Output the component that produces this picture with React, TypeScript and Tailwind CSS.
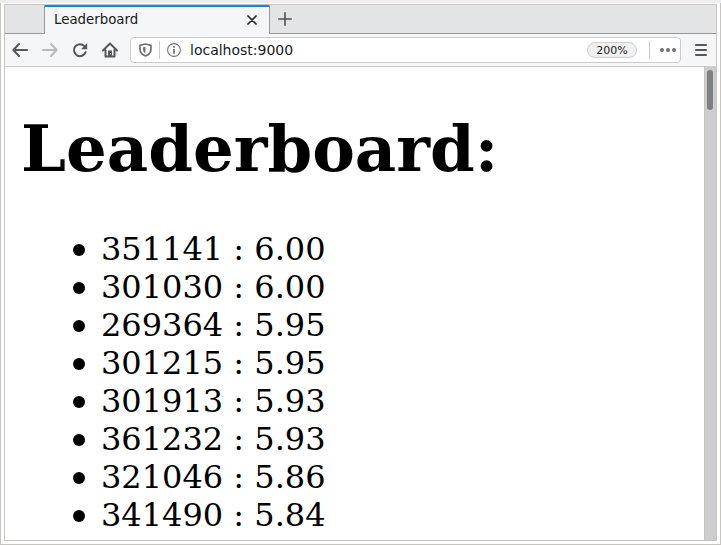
const scores = [
  ["351141", "6.00"],
  ["301030", "6.00"],
  ["269364", "5.95"],
  ["301215", "5.95"],
  ["301913", "5.93"],
  ["361232", "5.93"],
  ["321046", "5.86"],
  ["341490", "5.84"],
];

function TabBar() {
  return (
    <div className="flex h-[29px] shrink-0 bg-[#e2e4e6]">
      <div className="w-10 border-r border-b border-[#98989d]" />
      <div className="flex w-[224px] items-center justify-between border-t-2 border-[#0a84ff] bg-[#f5f6f8] pr-3 pb-px pl-[9px]">
        <span className="pb-px text-[13.33px] leading-[18px] text-[#18191a]">Leaderboard</span>
        <svg width="10" height="10" viewBox="0 0 10 10" fill="none" stroke="#242628" strokeWidth="1.7" strokeLinecap="round">
          <path d="M1 1l8 8M9 1L1 9" />
        </svg>
      </div>
      <div className="flex flex-1 items-center border-b border-l border-[#98989d] pl-2">
        <svg width="14" height="14" viewBox="0 0 14 14" fill="none" stroke="#4f5053" strokeWidth="1.6" strokeLinecap="round">
          <path d="M7 .8v12.4M.8 7h12.4" />
        </svg>
      </div>
    </div>
  );
}

function Arrow({ forward = false }: { forward?: boolean }) {
  return (
    <svg width="16" height="16" viewBox="0 0 16 16" fill="none" stroke={forward ? "#b8b9bb" : "#56575a"} strokeWidth="2" strokeLinecap="round" strokeLinejoin="round" className={forward ? "rotate-180" : ""}>
      <path d="M7 2L1.4 8L7 14M1.5 8H15" />
    </svg>
  );
}

function Toolbar() {
  return (
    <div className="flex h-[33px] shrink-0 items-center border-b border-[#cccccc] bg-[#f5f6f8] pl-[7px]">
      <div className="flex w-[118px] items-center gap-[14px]">
        <Arrow />
        <Arrow forward />
        <svg width="16" height="16" viewBox="0 0 16 16" fill="none" stroke="#56575a" strokeWidth="2">
          <path d="M13.6 10.2A6 6 0 1 1 12.4 4.1" strokeLinecap="round" />
          <path d="M15.2 1v6.2H9z" fill="#56575a" stroke="none" />
        </svg>
        <svg width="16" height="16" viewBox="0 0 16 16" fill="none" stroke="#56575a" strokeWidth="2" strokeLinecap="round" strokeLinejoin="round">
          <path d="M1 8.5L8 1.500L15 8.500M3.500 8v6.500h9V8" />
          <path d="M6 8.500h4V14H6z" fill="#56575a" stroke="none" />
          <path d="M8 11h1v1.500H8z" fill="#f5f6f8" stroke="none" />
        </svg>
      </div>
      <div className="flex h-[26px] w-[551px] items-center rounded-[4px] border border-[#cbcbcb] bg-white pr-[3px] pl-2">
        <svg width="13" height="14" viewBox="0 0 13 14" fill="none" stroke="#707173" strokeWidth="1.7" strokeLinejoin="round">
          <path d="M6.500 1L12 2.300V6c0 3.700-1.800 5.600-5.500 7C2.800 11.600 1 9.700 1 6V2.300z" />
          <path d="M6.500 3.700v6.600C4.700 9.400 4 8.300 4 6V4.300z" fill="#707173" stroke="none" />
        </svg>
        <div className="ml-[7px] h-[18px] w-px bg-[#cccccc]" />
        <svg className="ml-[7px]" width="14" height="14" viewBox="0 0 14 14" fill="none" stroke="#737476">
          <circle cx="7" cy="7" r="6.400" strokeWidth="1.100" />
          <path d="M7 6v4.800M7 3v1.700" strokeWidth="1.800" />
        </svg>
        <span className="ml-[9px] text-[14px] leading-[20px] text-[#18191a]">localhost:9000</span>
        <div className="ml-auto flex h-4 w-[50px] items-center justify-center rounded-full border border-[#cecece] bg-[#f0f0f0] pt-[2px] text-[11px] leading-[14px] text-[#202124]">200%</div>
        <div className="ml-3 h-[18px] w-px bg-[#c9c5bf]" />
        <svg className="ml-[10px]" width="17" height="4" viewBox="0 0 17 4" fill="#707173">
          <circle cx="2" cy="2" r="2" /><circle cx="8" cy="2" r="2" /><circle cx="14" cy="2" r="2" />
        </svg>
      </div>
      <svg className="ml-[14px]" width="12" height="12" viewBox="0 0 12 12" fill="none" stroke="#56575a" strokeWidth="2" strokeLinecap="round">
        <path d="M1 1h10M1 6h10M1 11h10" />
      </svg>
    </div>
  );
}

export default function App() {
  return (
    <div className="h-[545px] w-[721px] overflow-hidden border-t-[3px] border-[#ededed] bg-white font-['DejaVu_Sans',sans-serif]">
      <div className="h-[542px] border-x border-b border-[#c9c4be] px-[3px] pt-px pb-[3px]">
        <div className="flex h-full flex-col border border-[#c9c4be]">
          <TabBar />
          <Toolbar />
          <div className="flex min-h-0 flex-1">
            <main className="flex-1 overflow-hidden bg-white pl-4 font-['DejaVu_Serif',serif] text-black">
              <h1 className="mt-[44px] text-[64px] leading-[76px] font-bold">Leaderboard:</h1>
              <ul className="mt-[43px] text-[32px] leading-[38px]">
                {scores.map(([id, score]) => (
                  <li key={id} className="flex h-[38px] items-center pl-[52px]">
                    <span className="mt-0.5 mr-4 size-3 rounded-full bg-black" />
                    <span>{id} : {score}</span>
                  </li>
                ))}
              </ul>
            </main>
            <div className="w-3 border-l border-[#c9c4be] bg-[#cdcdcd] pt-[3px] pl-[2px]">
              <div className="h-10 w-[6px] rounded-full bg-[#7d8180]" />
            </div>
          </div>
        </div>
      </div>
    </div>
  );
}
